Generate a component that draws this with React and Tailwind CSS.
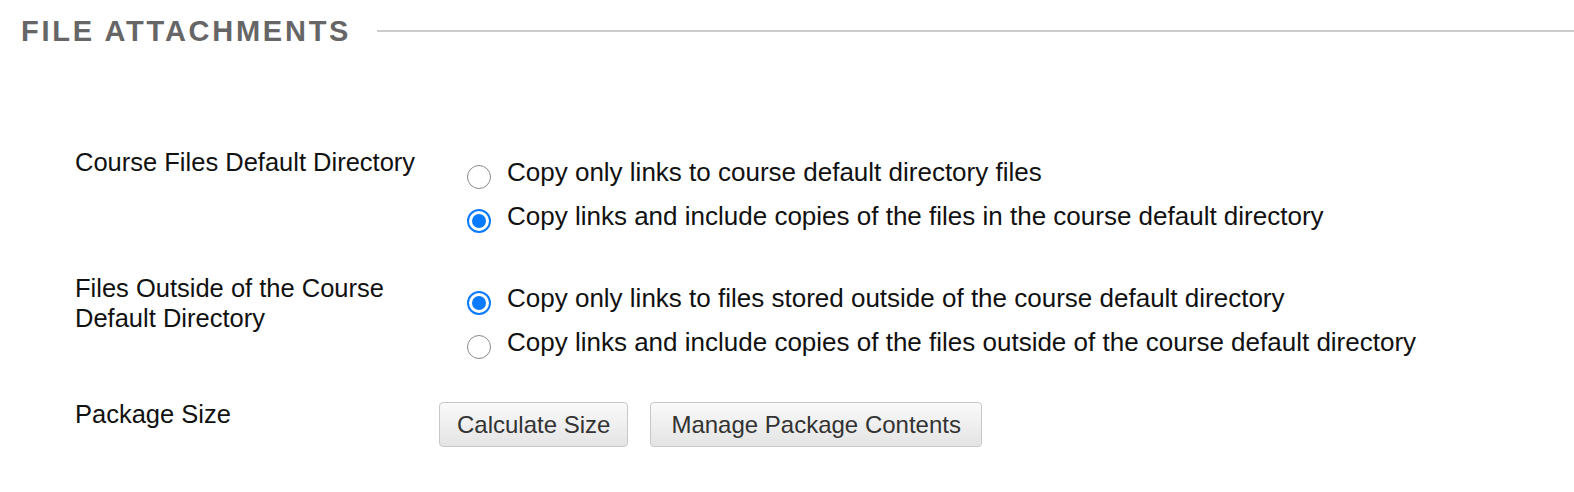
const font = { fontFamily: '"Liberation Sans", Arial, sans-serif' };

const Radio = ({ checked }) =>
  checked ? (
    <span className="w-[24px] h-[24px] rounded-full border-[2px] border-[#0a7aff] bg-white flex items-center justify-center shrink-0">
      <span className="block w-[14px] h-[14px] rounded-full bg-[#0a7aff]" />
    </span>
  ) : (
    <span className="block w-[24px] h-[24px] rounded-full border-[1.5px] border-[#8a8a8a] bg-white shrink-0" />
  );

const Option = ({ checked, children }) => (
  <label className="flex items-center h-[44px] text-[26px] leading-[30px]">
    <span className="block ml-[28px] mr-[16px] mt-[10px]">
      <Radio checked={checked} />
    </span>
    <span className="whitespace-nowrap">{children}</span>
  </label>
);

const Button = ({ children, wide }) => (
  <button
    className={
      "h-[45px] border border-[#c8c8c8] rounded-[4px] bg-gradient-to-b from-[#fafafa] to-[#e4e4e4] text-[#333] text-[24px] leading-none " +
      (wide ? "px-[20px]" : "px-[17px]")
    }
  >
    {children}
  </button>
);

export default function App() {
  return (
    <div className="bg-white w-[1574px] h-[492px] text-[#111]" style={font}>
      <div className="flex items-center pl-[21px] pt-[13px]">
        <h2 className="text-[29px] font-bold tracking-[2.75px] text-[#666] leading-[36px]">FILE ATTACHMENTS</h2>
        <div className="flex-1 h-[2px] bg-[#cccccc] ml-[26px]" />
      </div>

      <div className="pl-[75px] pt-[98px] text-[25.5px] leading-[30px]">
        <div className="grid grid-cols-[364px_1fr]">
          <div>Course Files Default Directory</div>
          <div className="mt-[3px]">
            <Option>Copy only links to course default directory files</Option>
            <Option checked>Copy links and include copies of the files in the course default directory</Option>
          </div>
        </div>

        <div className="grid grid-cols-[364px_1fr] mt-[35px]">
          <div className="w-[330px]">Files Outside of the Course Default Directory</div>
          <div className="mt-[3px]">
            <Option checked>Copy only links to files stored outside of the course default directory</Option>
            <Option>Copy links and include copies of the files outside of the course default directory</Option>
          </div>
        </div>

        <div className="grid grid-cols-[364px_1fr] mt-[35px]">
          <div>Package Size</div>
          <div className="flex gap-[22px] mt-[3px]">
            <Button>Calculate Size</Button>
            <Button wide>Manage Package Contents</Button>
          </div>
        </div>
      </div>
    </div>
  );
}
